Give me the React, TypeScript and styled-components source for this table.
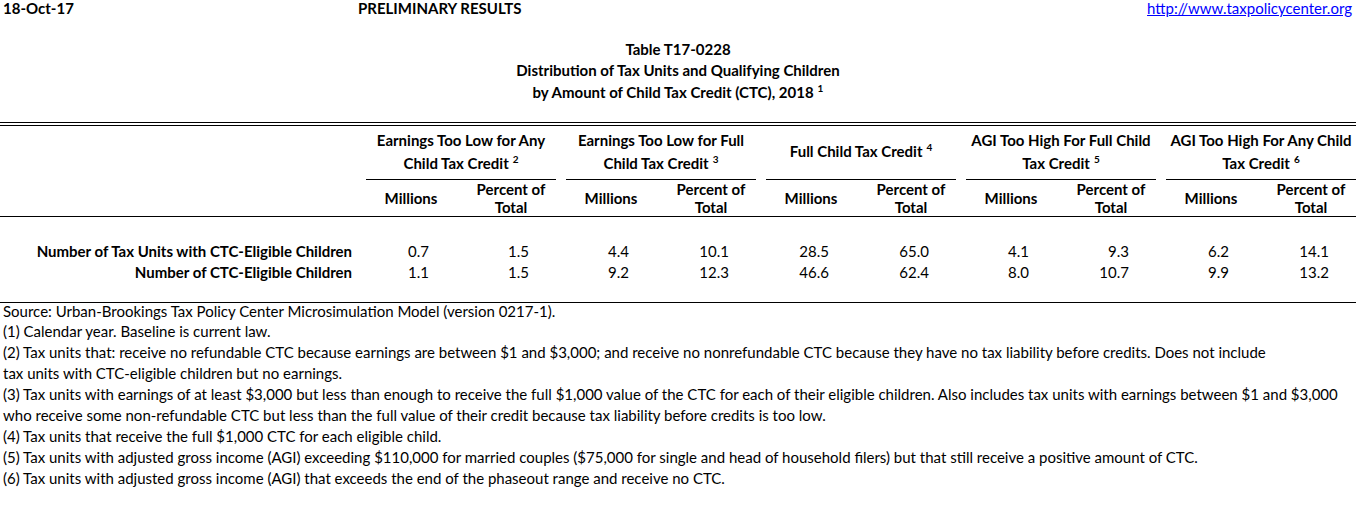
import React from "react";
import styled, { createGlobalStyle } from "styled-components";

const GlobalStyle = createGlobalStyle`
  html, body {
    margin: 0;
    padding: 0;
    background: #ffffff;
    overflow: hidden;
  }
  body {
    font-family: Lato, "Open Sans", "Liberation Sans", sans-serif;
    font-size: 15px;
    color: #000000;
  }
`;

const Page = styled.div`
  width: 1361px;
`;

const TopBar = styled.div`
  display: grid;
  grid-template-columns: 355px 1fr auto;
  height: 16px;
  line-height: 16px;
  padding: 0 4px 0 3px;
  font-weight: 700;
  width: 1349px;
`;

const Link = styled.a`
  font-weight: 400;
  color: #0000ff;
  text-decoration: underline;
`;

const TitleBlock = styled.div`
  margin-top: 22.5px;
  width: 1356px;
  text-align: center;
  font-weight: 700;
  line-height: 21.5px;
`;

const Sup = styled.sup`
  font-size: 10px;
  vertical-align: 6px;
  line-height: 0;
  margin-left: 4px;
`;

const DoubleRule = styled.div`
  margin-top: 19px;
  height: 2px;
  border-top: 1px solid #000;
  border-bottom: 1px solid #000;
`;

const Grid = styled.div`
  display: grid;
  grid-template-columns: 361px repeat(10, 100px);
`;

const HeaderGrid = styled(Grid)`
  border-bottom: 1px solid #000;
  font-weight: 700;
  width: 1356px;
  overflow: hidden;
`;

const Corner = styled.div`
  grid-row: span 2;
`;

const GroupCell = styled.div`
  grid-column: span 2;
  margin: 0 5px;
  height: 54px;
  box-sizing: border-box;
  padding-bottom: 2px;
  border-bottom: 1px solid #000;
  display: flex;
  align-items: center;
  justify-content: center;
  text-align: center;
  line-height: 23px;
  white-space: nowrap;
`;

const SubCell = styled.div`
  height: 36px;
  display: flex;
  align-items: center;
  justify-content: center;
  text-align: center;
  line-height: 18px;
`;

const Body = styled.div`
  padding: 23.5px 0 19.5px;
  border-bottom: 1px solid #000;
  width: 1356px;
`;

const DataRow = styled(Grid)`
  height: 21px;
  line-height: 21px;
`;

const Label = styled.div`
  font-weight: 700;
  text-align: right;
  padding-right: 9px;
  white-space: nowrap;
`;

const Num = styled.div`
  text-align: right;
  padding-right: 32px;
`;

const Notes = styled.div`
  margin-top: -2.5px;
  padding-left: 3px;
  line-height: 20.9px;
  white-space: nowrap;
`;

const groups: { lines: string[]; note: string }[] = [
  { lines: ["Earnings Too Low for Any", "Child Tax Credit"], note: "2" },
  { lines: ["Earnings Too Low for Full", "Child Tax Credit"], note: "3" },
  { lines: ["Full Child Tax Credit"], note: "4" },
  { lines: ["AGI Too High For Full Child", "Tax Credit"], note: "5" },
  { lines: ["AGI Too High For Any Child", "Tax Credit"], note: "6" },
];

const rows: { label: string; values: string[] }[] = [
  {
    label: "Number of Tax Units with CTC-Eligible Children",
    values: ["0.7", "1.5", "4.4", "10.1", "28.5", "65.0", "4.1", "9.3", "6.2", "14.1"],
  },
  {
    label: "Number of CTC-Eligible Children",
    values: ["1.1", "1.5", "9.2", "12.3", "46.6", "62.4", "8.0", "10.7", "9.9", "13.2"],
  },
];

const notes = [
  "Source: Urban-Brookings Tax Policy Center Microsimulation Model (version 0217-1).",
  "(1) Calendar year. Baseline is current law.",
  "(2) Tax units that: receive no refundable CTC because earnings are between $1 and $3,000; and receive no nonrefundable CTC because they have no tax liability before credits. Does not include",
  "tax units with CTC-eligible children but no earnings.",
  "(3) Tax units with earnings of at least $3,000 but less than enough to receive the full $1,000 value of the CTC for each of their eligible children. Also includes tax units with earnings between $1 and $3,000",
  "who receive some non-refundable CTC but less than the full value of their credit because tax liability before credits is too low.",
  "(4) Tax units that receive the full $1,000 CTC for each eligible child.",
  "(5) Tax units with adjusted gross income (AGI) exceeding $110,000 for married couples ($75,000 for single and head of household filers) but that still receive a positive amount of CTC.",
  "(6) Tax units with adjusted gross income (AGI) that exceeds the end of the phaseout range and receive no CTC.",
];

export default function App() {
  return (
    <Page>
      <GlobalStyle />
      <TopBar>
        <span>18-Oct-17</span>
        <span>PRELIMINARY RESULTS</span>
        <Link href="#">http://www.taxpolicycenter.org</Link>
      </TopBar>
      <TitleBlock>
        <div>Table T17-0228</div>
        <div>Distribution of Tax Units and Qualifying Children</div>
        <div>
          by Amount of Child Tax Credit (CTC), 2018<Sup>1</Sup>
        </div>
      </TitleBlock>
      <DoubleRule />
      <HeaderGrid>
        <Corner />
        {groups.map((g, i) => (
          <GroupCell key={i}>
            <div>
              {g.lines.map((l, j) => (
                <div key={j}>
                  {l}
                  {j === g.lines.length - 1 && <Sup>{g.note}</Sup>}
                </div>
              ))}
            </div>
          </GroupCell>
        ))}
        {groups.map((_, i) => (
          <React.Fragment key={i}>
            <SubCell>Millions</SubCell>
            <SubCell>
              Percent of
              <br />
              Total
            </SubCell>
          </React.Fragment>
        ))}
      </HeaderGrid>
      <Body>
        {rows.map((r) => (
          <DataRow key={r.label}>
            <Label>{r.label}</Label>
            {r.values.map((v, i) => (
              <Num key={i}>{v}</Num>
            ))}
          </DataRow>
        ))}
      </Body>
      <Notes>
        {notes.map((n, i) => (
          <div key={i}>{n}</div>
        ))}
      </Notes>
    </Page>
  );
}
